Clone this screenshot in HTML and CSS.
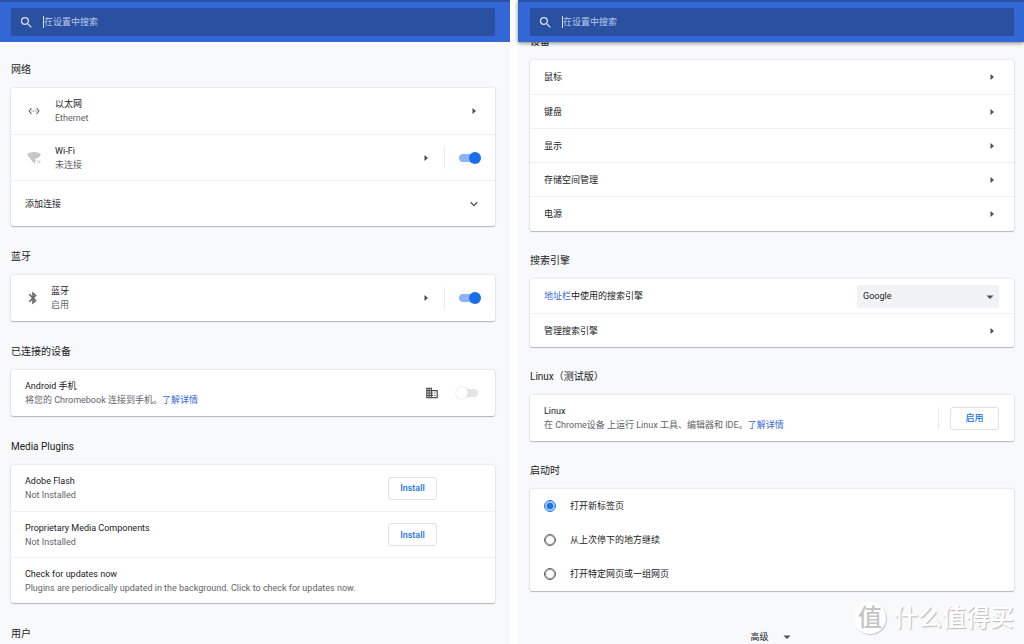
FILE: index.html
```html
<!DOCTYPE html>
<html lang="zh-CN">
<head>
<meta charset="utf-8">
<title>设置</title>
<link rel="stylesheet" href="styles.css">
</head>
<body>
<svg class="defs" aria-hidden="true">
  <symbol id="search" viewBox="0 0 24 24"><path d="M15.5 14h-.79l-.28-.27A6.47 6.47 0 0 0 16 9.5 6.5 6.5 0 1 0 9.5 16c1.61 0 3.09-.59 4.23-1.57l.27.28v.79l5 4.99L20.49 19l-4.99-5zm-6 0C7.01 14 5 11.99 5 9.5S7.01 5 9.5 5 14 7.01 14 9.5 11.99 14 9.5 14z"/></symbol>
  <symbol id="arrow-right" viewBox="0 0 14 14"><path d="M5.5 4v6l3.500-3z"/></symbol>
  <symbol id="arrow-down" viewBox="0 0 14 14"><path d="M3.500 5.500h7l-3.500 3.500z"/></symbol>
  <symbol id="chevron-down" viewBox="0 0 14 14"><path d="M3.700 5.300 7 8.600l3.300-3.300" fill="none" stroke="currentColor" stroke-width="1.300"/></symbol>
  <symbol id="ethernet" viewBox="0 0 24 24"><path d="M7.770 6.760 6.230 5.480.820 12l5.410 6.520 1.540-1.280L3.420 12l4.350-5.240zM7 13h2v-2H7v2zm10-2h-2v2h2v-2zm-6 2h2v-2h-2v2zm6.770-7.520-1.540 1.280L20.580 12l-4.350 5.240 1.540 1.280L23.180 12l-5.410-6.520z"/></symbol>
  <symbol id="wifi-off" viewBox="0 0 16 16"><path d="M1 4.500C5 1.300 11 1.300 15 4.500L12 8.200H9.500V11.500L8 13.500z"/><path d="m11 10 3.500 3.500m0-3.500L11 13.500" fill="none" stroke="currentColor" stroke-width="0.900"/></symbol>
  <symbol id="bluetooth" viewBox="0 0 24 24"><path stroke="currentColor" stroke-width="0.8" d="M17.710 7.710 12 2h-1v7.590L6.410 5 5 6.410 10.590 12 5 17.590 6.410 19 11 14.410V22h1l5.710-5.710-4.300-4.290 4.300-4.290zM13 5.830l1.880 1.880L13 9.590V5.830zm1.880 10.460L13 18.170v-3.760l1.880 1.880z"/></symbol>
  <symbol id="domain" viewBox="0 0 24 24"><path d="M12 7V3H2v18h20V7H12zM6 19H4v-2h2v2zm0-4H4v-2h2v2zm0-4H4V9h2v2zm0-4H4V5h2v2zm4 12H8v-2h2v2zm0-4H8v-2h2v2zm0-4H8V9h2v2zm0-4H8V5h2v2zm10 12h-8v-2h2v-2h-2v-2h2v-2h-2V9h8v10zm-2-8h-2v2h2v-2zm0 4h-2v2h2v-2z"/></symbol>
</svg>

<div class="screens">
  <main class="panel panel-network">
    <header class="toolbar">
      <label class="search">
        <svg class="search-icon" aria-hidden="true"><use href="#search"/></svg>
        <input class="search-input" type="text" placeholder="在设置中搜索" aria-label="在设置中搜索">
      </label>
    </header>
    <div class="content">
      <section class="section">
        <h2 class="heading">网络</h2>
        <div class="card">
          <div class="row">
            <svg class="row-icon icon-ethernet" aria-hidden="true"><use href="#ethernet"/></svg>
            <div class="text"><p class="title">以太网</p><p class="sub">Ethernet</p></div>
            <button class="icon-button" aria-label="以太网"><svg class="icon"><use href="#arrow-right"/></svg></button>
          </div>
          <div class="row">
            <svg class="row-icon icon-wifi" aria-hidden="true"><use href="#wifi-off"/></svg>
            <div class="text"><p class="title">Wi-Fi</p><p class="sub">未连接</p></div>
            <button class="icon-button" aria-label="Wi-Fi 详情"><svg class="icon"><use href="#arrow-right"/></svg></button>
            <span class="divider"></span>
            <input class="toggle" type="checkbox" aria-label="Wi-Fi" checked>
          </div>
          <div class="row">
            <div class="text"><p class="title">添加连接</p></div>
            <button class="icon-button" aria-label="添加连接"><svg class="icon"><use href="#chevron-down"/></svg></button>
          </div>
        </div>
      </section>
      <section class="section">
        <h2 class="heading">蓝牙</h2>
        <div class="card">
          <div class="row">
            <svg class="row-icon icon-bluetooth" aria-hidden="true"><use href="#bluetooth"/></svg>
            <div class="text"><p class="title">蓝牙</p><p class="sub">启用</p></div>
            <button class="icon-button" aria-label="蓝牙详情"><svg class="icon"><use href="#arrow-right"/></svg></button>
            <span class="divider"></span>
            <input class="toggle" type="checkbox" aria-label="蓝牙" checked>
          </div>
        </div>
      </section>
      <section class="section">
        <h2 class="heading">已连接的设备</h2>
        <div class="card">
          <div class="row">
            <div class="text"><p class="title">Android 手机</p><p class="sub">将您的 Chromebook 连接到手机。<a class="link" href="#">了解详情</a></p></div>
            <svg class="icon icon-domain" aria-hidden="true"><use href="#domain"/></svg>
            <input class="toggle" type="checkbox" aria-label="Android 手机">
          </div>
        </div>
      </section>
      <section class="section">
        <h2 class="heading">Media Plugins</h2>
        <div class="card">
          <div class="row row-install">
            <div class="text"><p class="title">Adobe Flash</p><p class="sub">Not Installed</p></div>
            <button class="button">Install</button>
          </div>
          <div class="row row-install">
            <div class="text"><p class="title">Proprietary Media Components</p><p class="sub">Not Installed</p></div>
            <button class="button">Install</button>
          </div>
          <div class="row">
            <div class="text"><p class="title">Check for updates now</p><p class="sub">Plugins are periodically updated in the background. Click to check for updates now.</p></div>
          </div>
        </div>
      </section>
      <section class="section">
        <h2 class="heading">用户</h2>
      </section>
    </div>
  </main>

  <main class="panel panel-device">
    <header class="toolbar toolbar-raised">
      <label class="search">
        <svg class="search-icon" aria-hidden="true"><use href="#search"/></svg>
        <input class="search-input" type="text" placeholder="在设置中搜索" aria-label="在设置中搜索">
      </label>
    </header>
    <div class="content content-scrolled">
      <section class="section">
        <h2 class="heading">设备</h2>
        <div class="card card-list">
          <div class="row row-single"><p class="title text">鼠标</p><button class="icon-button" aria-label="鼠标"><svg class="icon"><use href="#arrow-right"/></svg></button></div>
          <div class="row row-single"><p class="title text">键盘</p><button class="icon-button" aria-label="键盘"><svg class="icon"><use href="#arrow-right"/></svg></button></div>
          <div class="row row-single"><p class="title text">显示</p><button class="icon-button" aria-label="显示"><svg class="icon"><use href="#arrow-right"/></svg></button></div>
          <div class="row row-single"><p class="title text">存储空间管理</p><button class="icon-button" aria-label="存储空间管理"><svg class="icon"><use href="#arrow-right"/></svg></button></div>
          <div class="row row-single"><p class="title text">电源</p><button class="icon-button" aria-label="电源"><svg class="icon"><use href="#arrow-right"/></svg></button></div>
        </div>
      </section>
      <section class="section">
        <h2 class="heading">搜索引擎</h2>
        <div class="card">
          <div class="row row-single">
            <p class="title text"><a class="link" href="#">地址栏</a>中使用的搜索引擎</p>
            <div class="select-box">
              <select class="select" aria-label="搜索引擎"><option>Google</option></select>
              <svg class="icon select-arrow" aria-hidden="true"><use href="#arrow-down"/></svg>
            </div>
          </div>
          <div class="row row-single"><p class="title text">管理搜索引擎</p><button class="icon-button" aria-label="管理搜索引擎"><svg class="icon"><use href="#arrow-right"/></svg></button></div>
        </div>
      </section>
      <section class="section">
        <h2 class="heading">Linux（测试版）</h2>
        <div class="card">
          <div class="row">
            <div class="text"><p class="title">Linux</p><p class="sub">在 Chrome设备 上运行 Linux 工具、编辑器和 IDE。<a class="link" href="#">了解详情</a></p></div>
            <span class="divider divider-button"></span>
            <button class="button">启用</button>
          </div>
        </div>
      </section>
      <section class="section">
        <h2 class="heading">启动时</h2>
        <div class="card">
          <label class="row row-single row-radio"><input class="radio" type="radio" name="startup" checked><span class="title">打开新标签页</span></label>
          <label class="row row-single row-radio"><input class="radio" type="radio" name="startup"><span class="title">从上次停下的地方继续</span></label>
          <label class="row row-single row-radio"><input class="radio" type="radio" name="startup"><span class="title">打开特定网页或一组网页</span></label>
        </div>
      </section>
      <button class="advanced">高级<svg class="icon" aria-hidden="true"><use href="#arrow-down"/></svg></button>
    </div>
    <div class="watermark"><span class="watermark-badge">值</span><span class="watermark-name">什么值得买</span></div>
  </main>
</div>
</body>
</html>
```
FILE: styles.css
```css
* {
  box-sizing: border-box;
}

body {
  margin: 0;
  background: #fff;
  color: #202124;
  font: 9px/14px Roboto, "Noto Sans CJK SC", sans-serif;
}

button,
input,
select {
  margin: 0;
  font: inherit;
  color: inherit;
}

h2,
p {
  margin: 0;
}

.defs {
  display: none;
}

.screens {
  display: grid;
  grid-template-columns: 510fr 506fr;
  gap: 8px;
  min-height: 100vh;
}

.panel {
  --edge-left: 11px;
  --edge-right: 15px;
  --section-gap: 24px;
  --row-right: 14px;
  position: relative;
  min-width: 0;
  background: #f8f9fb;
}

.panel-device {
  --edge-left: 12px;
  --edge-right: 10px;
  --section-gap: 23px;
  --row-right: 15px;
}

.toolbar {
  position: relative;
  z-index: 1;
  height: 42px;
  padding: 6px var(--edge-right) 6px var(--edge-left);
  border-top: 2px solid #2a50a5;
  background: #3367d6;
}

.toolbar-raised {
  box-shadow: 0 1px 4px rgba(0, 0, 0, 0.5);
}

.search {
  display: flex;
  align-items: center;
  height: 28px;
  padding: 0 8px;
  border-radius: 1px;
  background: #2a50a2;
}

.search-icon {
  width: 15px;
  height: 15px;
  margin-right: 9px;
  fill: #d5def2;
}

.search-input {
  flex: 1;
  height: 12px;
  padding: 0;
  border: 0;
  border-left: 1px solid #d5def2;
  outline: 0;
  background: none;
  color: #fff;
}

.search-input::placeholder {
  color: #bccae8;
}

.content {
  display: flex;
  flex-direction: column;
  gap: var(--section-gap);
  padding: 21px var(--edge-right) 0 var(--edge-left);
}

.content-scrolled {
  margin-top: -7px;
  padding-top: 0;
}

.heading {
  margin-bottom: 11px;
  font-size: 10px;
  font-weight: 400;
  line-height: 14px;
}

.heading:last-child {
  margin-bottom: 0;
}

.card {
  border-radius: 2px;
  background: #fff;
  box-shadow: 0 1px 1px rgba(60, 64, 67, 0.3), 0 0 2px rgba(60, 64, 67, 0.25);
}

.card-list {
  padding-bottom: 1px;
}

.row {
  display: flex;
  align-items: center;
  min-height: 46px;
  padding: 0 var(--row-right) 0 14px;
}

.row-single {
  min-height: 34px;
}

.row + .row {
  border-top: 1px solid #f0f1f2;
}

.row-radio + .row-radio {
  border-top: 0;
}

.row-install {
  padding-right: 58px;
}

.text {
  flex: 1;
  min-width: 0;
}

.sub {
  color: #5f6368;
}

.link {
  color: #3367d6;
  text-decoration: none;
}

.row-icon {
  flex: none;
  margin-right: 14px;
  fill: #5f6368;
  color: #5f6368;
}

.icon-ethernet {
  width: 12px;
  height: 12px;
  margin-left: 3px;
  margin-right: 15px;
}

.icon-wifi {
  width: 16px;
  height: 16px;
  margin-left: 1px;
  margin-right: 13px;
  fill: #c6c7c9;
  color: #c6c7c9;
}

.icon-bluetooth {
  width: 14px;
  height: 14px;
  margin-left: 1px;
  margin-right: 11px;
}

.icon {
  display: block;
  flex: none;
  width: 14px;
  height: 14px;
  fill: #4b4f54;
  color: #4b4f54;
}

.icon-button {
  width: 14px;
  height: 14px;
  padding: 0;
  border: 0;
  background: none;
}

.icon-domain {
  margin-right: 20px;
}

.divider {
  width: 1px;
  height: 22px;
  margin: 0 14px 0 11px;
  background: #e8eaed;
}

.divider-button {
  margin-right: 11px;
}

.toggle {
  appearance: none;
  position: relative;
  width: 22px;
  height: 12px;
}

.toggle::before {
  content: "";
  position: absolute;
  inset: 2px 3px 2px 1px;
  border-radius: 4px;
  background: #e4e5e7;
}

.toggle::after {
  content: "";
  position: absolute;
  top: 0;
  left: -3px;
  width: 12px;
  height: 12px;
  border-radius: 50%;
  background: #fff;
  box-shadow: 0 0 2px rgba(0, 0, 0, 0.2);
}

.toggle:checked::before {
  inset: 2px 1px 2px 0;
  background: #8cb4f5;
}

.toggle:checked::after {
  left: 10px;
  background: #1a6fe8;
  box-shadow: none;
}

.button {
  min-width: 49px;
  height: 23px;
  padding: 0 10px;
  border: 1px solid #dfe1e5;
  border-radius: 3px;
  background: #fff;
  color: #1a73e8;
  font-weight: 500;
}

.select-box {
  position: relative;
  width: 142px;
}

.select {
  appearance: none;
  display: block;
  width: 100%;
  height: 23px;
  padding: 0 20px 0 6px;
  border: 0;
  border-radius: 2px;
  background: #f1f2f4;
}

.select-arrow {
  position: absolute;
  top: 5px;
  right: 2px;
  pointer-events: none;
}

.radio {
  appearance: none;
  width: 12px;
  height: 12px;
  margin-right: 14px;
  border: 1px solid #5f6368;
  border-radius: 50%;
  outline: 1px solid rgba(95, 99, 104, 0.7);
  outline-offset: -2px;
}

.radio:checked {
  border-color: #1a73e8;
  outline-color: rgba(26, 115, 232, 0.5);
  background: radial-gradient(circle, #1a73e8 3px, transparent 4px);
}

.advanced {
  display: flex;
  align-items: center;
  align-self: center;
  gap: 11px;
  height: 14px;
  margin-top: 16px;
  padding: 0;
  border: 0;
  background: none;
}

.watermark {
  position: absolute;
  right: 10px;
  bottom: 10px;
  display: flex;
  align-items: center;
  gap: 8px;
}

.watermark-badge {
  width: 32px;
  height: 32px;
  border-radius: 50%;
  background: #fff;
  box-shadow: 1px 1px 1px #c8c9cb;
  color: #c4c5c7;
  font-size: 24px;
  font-weight: 500;
  line-height: 32px;
  text-align: center;
}

.watermark-name {
  color: #fff;
  font-size: 24px;
  font-weight: 500;
  line-height: 32px;
  text-shadow: 1px 1px 1px #b9babc;
}
```
